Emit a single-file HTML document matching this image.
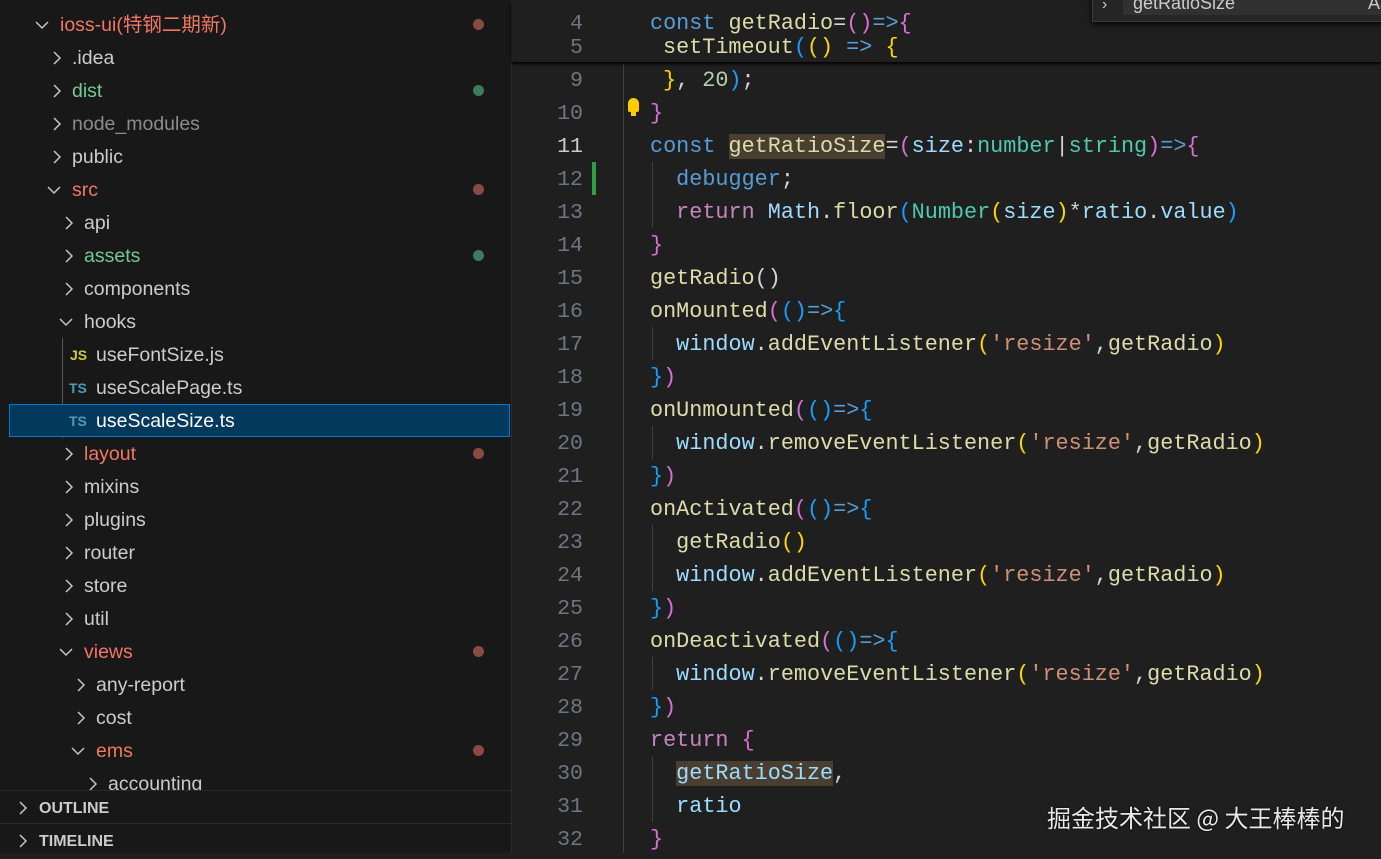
<!DOCTYPE html>
<html><head><meta charset="utf-8"><style>
*{margin:0;padding:0;box-sizing:border-box}
body{width:1381px;height:853px;overflow:hidden;background:#1f1f1f;position:relative;font-family:"Liberation Sans","Noto Sans CJK SC",sans-serif}
#side{position:absolute;left:0;top:0;width:512px;height:853px;background:#181818;border-right:1px solid #2b2b2b}
.row{position:absolute;left:0;width:512px;height:33px;line-height:35px;font-size:19.5px;color:#cccccc;white-space:nowrap}
.chev{position:absolute;top:0;width:14px;height:33px}
.chev svg{position:absolute;top:10px;left:0}
.dot{position:absolute;left:473px;top:11px;width:11px;height:11px;border-radius:50%}
.red{color:#f07764}.grn{color:#73c991}.gry{color:#8c8c8c}
.ic{position:absolute;font-size:14px;font-weight:bold}
#code{position:absolute;left:512px;top:0;width:869px;height:853px}
.ln{position:absolute;left:0;width:71px;text-align:right;font-family:"Liberation Mono",monospace;font-size:21.6px;color:#6e7681;line-height:36px;height:33px}
.cl{position:absolute;left:138px;font-family:"Liberation Mono",monospace;font-size:21.8px;line-height:36px;height:33px;white-space:pre;color:#d4d4d4}
.k{color:#569cd6}.f{color:#dcdcaa}.v{color:#9cdcfe}.t{color:#4ec9b0}.s{color:#ce9178}.r{color:#c586c0}.n{color:#b5cea8}
.b1{color:#ffd700}.b2{color:#da70d6}.b3{color:#179fff}
.hl{background:#4a3e30}
.guide{position:absolute;width:1px;background:#404040}
</style></head><body>
<div id="side">
<div style="position:absolute;left:62px;top:338px;width:1px;height:100px;background:#585858"></div>
<div class="row" style="top:8px"><span class="chev" style="left:35px"><svg width="14" height="14"><path d="M1 4 L7 10 L13 4" stroke="#c5c5c5" stroke-width="1.5" fill="none"/></svg></span><span class="red" style="position:absolute;left:60px">ioss-ui(特钢二期新)</span><span class="dot" style="background:#8a4a44"></span></div>
<div class="row" style="top:41px"><span class="chev" style="left:50px"><svg width="14" height="14"><path d="M4 1 L10 7 L4 13" stroke="#c5c5c5" stroke-width="1.5" fill="none"/></svg></span><span style="position:absolute;left:72px">.idea</span></div>
<div class="row" style="top:74px"><span class="chev" style="left:50px"><svg width="14" height="14"><path d="M4 1 L10 7 L4 13" stroke="#c5c5c5" stroke-width="1.5" fill="none"/></svg></span><span class="grn" style="position:absolute;left:72px">dist</span><span class="dot" style="background:#3f7a5a"></span></div>
<div class="row" style="top:107px"><span class="chev" style="left:50px"><svg width="14" height="14"><path d="M4 1 L10 7 L4 13" stroke="#c5c5c5" stroke-width="1.5" fill="none"/></svg></span><span class="gry" style="position:absolute;left:72px">node_modules</span></div>
<div class="row" style="top:140px"><span class="chev" style="left:50px"><svg width="14" height="14"><path d="M4 1 L10 7 L4 13" stroke="#c5c5c5" stroke-width="1.5" fill="none"/></svg></span><span style="position:absolute;left:72px">public</span></div>
<div class="row" style="top:173px"><span class="chev" style="left:47px"><svg width="14" height="14"><path d="M1 4 L7 10 L13 4" stroke="#c5c5c5" stroke-width="1.5" fill="none"/></svg></span><span class="red" style="position:absolute;left:72px">src</span><span class="dot" style="background:#8a4a44"></span></div>
<div class="row" style="top:206px"><span class="chev" style="left:62px"><svg width="14" height="14"><path d="M4 1 L10 7 L4 13" stroke="#c5c5c5" stroke-width="1.5" fill="none"/></svg></span><span style="position:absolute;left:84px">api</span></div>
<div class="row" style="top:239px"><span class="chev" style="left:62px"><svg width="14" height="14"><path d="M4 1 L10 7 L4 13" stroke="#c5c5c5" stroke-width="1.5" fill="none"/></svg></span><span class="grn" style="position:absolute;left:84px">assets</span><span class="dot" style="background:#3f7a5a"></span></div>
<div class="row" style="top:272px"><span class="chev" style="left:62px"><svg width="14" height="14"><path d="M4 1 L10 7 L4 13" stroke="#c5c5c5" stroke-width="1.5" fill="none"/></svg></span><span style="position:absolute;left:84px">components</span></div>
<div class="row" style="top:305px"><span class="chev" style="left:59px"><svg width="14" height="14"><path d="M1 4 L7 10 L13 4" stroke="#c5c5c5" stroke-width="1.5" fill="none"/></svg></span><span style="position:absolute;left:84px">hooks</span></div>
<div class="row" style="top:338px"><span class="ic" style="left:70px;color:#cbcb41">JS</span><span style="position:absolute;left:96px">useFontSize.js</span></div>
<div class="row" style="top:371px"><span class="ic" style="left:69px;color:#519aba">TS</span><span style="position:absolute;left:96px">useScalePage.ts</span></div>
<div class="row" style="top:404px;left:9px;width:501px;background:#04395e;border:1px solid #0078d4;line-height:33px"><span class="ic" style="left:59px;color:#519aba">TS</span><span style="position:absolute;left:86px;color:#fff">useScaleSize.ts</span></div>
<div class="row" style="top:437px"><span class="chev" style="left:62px"><svg width="14" height="14"><path d="M4 1 L10 7 L4 13" stroke="#c5c5c5" stroke-width="1.5" fill="none"/></svg></span><span class="red" style="position:absolute;left:84px">layout</span><span class="dot" style="background:#8a4a44"></span></div>
<div class="row" style="top:470px"><span class="chev" style="left:62px"><svg width="14" height="14"><path d="M4 1 L10 7 L4 13" stroke="#c5c5c5" stroke-width="1.5" fill="none"/></svg></span><span style="position:absolute;left:84px">mixins</span></div>
<div class="row" style="top:503px"><span class="chev" style="left:62px"><svg width="14" height="14"><path d="M4 1 L10 7 L4 13" stroke="#c5c5c5" stroke-width="1.5" fill="none"/></svg></span><span style="position:absolute;left:84px">plugins</span></div>
<div class="row" style="top:536px"><span class="chev" style="left:62px"><svg width="14" height="14"><path d="M4 1 L10 7 L4 13" stroke="#c5c5c5" stroke-width="1.5" fill="none"/></svg></span><span style="position:absolute;left:84px">router</span></div>
<div class="row" style="top:569px"><span class="chev" style="left:62px"><svg width="14" height="14"><path d="M4 1 L10 7 L4 13" stroke="#c5c5c5" stroke-width="1.5" fill="none"/></svg></span><span style="position:absolute;left:84px">store</span></div>
<div class="row" style="top:602px"><span class="chev" style="left:62px"><svg width="14" height="14"><path d="M4 1 L10 7 L4 13" stroke="#c5c5c5" stroke-width="1.5" fill="none"/></svg></span><span style="position:absolute;left:84px">util</span></div>
<div class="row" style="top:635px"><span class="chev" style="left:59px"><svg width="14" height="14"><path d="M1 4 L7 10 L13 4" stroke="#c5c5c5" stroke-width="1.5" fill="none"/></svg></span><span class="red" style="position:absolute;left:84px">views</span><span class="dot" style="background:#8a4a44"></span></div>
<div class="row" style="top:668px"><span class="chev" style="left:74px"><svg width="14" height="14"><path d="M4 1 L10 7 L4 13" stroke="#c5c5c5" stroke-width="1.5" fill="none"/></svg></span><span style="position:absolute;left:96px">any-report</span></div>
<div class="row" style="top:701px"><span class="chev" style="left:74px"><svg width="14" height="14"><path d="M4 1 L10 7 L4 13" stroke="#c5c5c5" stroke-width="1.5" fill="none"/></svg></span><span style="position:absolute;left:96px">cost</span></div>
<div class="row" style="top:734px"><span class="chev" style="left:71px"><svg width="14" height="14"><path d="M1 4 L7 10 L13 4" stroke="#c5c5c5" stroke-width="1.5" fill="none"/></svg></span><span class="red" style="position:absolute;left:96px">ems</span><span class="dot" style="background:#8a4a44"></span></div>
<div class="row" style="top:767px;height:24px;overflow:hidden"><span class="chev" style="left:86px"><svg width="14" height="14"><path d="M4 1 L10 7 L4 13" stroke="#c5c5c5" stroke-width="1.5" fill="none"/></svg></span><span style="position:absolute;left:108px">accounting</span></div>
<div style="position:absolute;left:0;top:790px;width:512px;height:1px;background:#2b2b2b"></div>
<div class="row" style="top:791px;font-size:16px;font-weight:bold"><span class="chev" style="left:16px"><svg width="14" height="14"><path d="M4 1 L10 7 L4 13" stroke="#c5c5c5" stroke-width="1.5" fill="none"/></svg></span><span style="position:absolute;left:39px">OUTLINE</span></div>
<div style="position:absolute;left:0;top:823px;width:512px;height:1px;background:#2b2b2b"></div>
<div class="row" style="top:824px;font-size:16px;font-weight:bold"><span class="chev" style="left:16px"><svg width="14" height="14"><path d="M4 1 L10 7 L4 13" stroke="#c5c5c5" stroke-width="1.5" fill="none"/></svg></span><span style="position:absolute;left:39px">TIMELINE</span></div>
</div>

<div id="code">
<div class="guide" style="left:111px;top:64px;height:789px"></div>
<div class="guide" style="left:140px;top:162px;height:66px"></div>
<div class="guide" style="left:140px;top:327px;height:33px"></div>
<div class="guide" style="left:140px;top:426px;height:33px"></div>
<div class="guide" style="left:140px;top:525px;height:66px"></div>
<div class="guide" style="left:140px;top:657px;height:33px"></div>
<div class="guide" style="left:140px;top:756px;height:66px"></div>
<div style="position:absolute;left:80px;top:162px;width:4px;height:33px;background:#2ea043"></div>

<div class="ln" style="top:63px">9</div><div class="cl" style="top:63px;left:151px"><span class="b1">}</span>, <span class="n">20</span><span class="b3">)</span>;</div>
<div class="ln" style="top:96px">10</div><div class="cl" style="top:96px"><span class="b2">}</span></div>
<div style="position:absolute;left:116px;top:98px;width:11px;height:14px;background:#ffcc00;border-radius:6px 6px 2px 2px"></div>
<div style="position:absolute;left:119px;top:112px;width:5px;height:4px;background:#ffcc00"></div>
<div class="ln" style="top:129px;color:#cccccc">11</div><div class="cl" style="top:129px"><span class="k">const</span> <span class="f hl">getRatioSize</span>=<span class="b2">(</span><span class="v">size</span>:<span class="t">number</span>|<span class="t">string</span><span class="b2">)</span><span class="k">=&gt;</span><span class="b2">{</span></div>
<div class="ln" style="top:162px">12</div><div class="cl" style="top:162px">  <span class="k">debugger</span>;</div>
<div class="ln" style="top:195px">13</div><div class="cl" style="top:195px">  <span class="r">return</span> <span class="v">Math</span>.<span class="f">floor</span><span class="b3">(</span><span class="t">Number</span><span class="b1">(</span><span class="v">size</span><span class="b1">)</span>*<span class="v">ratio</span>.<span class="v">value</span><span class="b3">)</span></div>
<div class="ln" style="top:228px">14</div><div class="cl" style="top:228px"><span class="b2">}</span></div>
<div class="ln" style="top:261px">15</div><div class="cl" style="top:261px"><span class="f">getRadio</span>()</div>
<div class="ln" style="top:294px">16</div><div class="cl" style="top:294px"><span class="f">onMounted</span><span class="b2">(</span><span class="b3">()</span><span class="k">=&gt;</span><span class="b3">{</span></div>
<div class="ln" style="top:327px">17</div><div class="cl" style="top:327px">  <span class="v">window</span>.<span class="f">addEventListener</span><span class="b1">(</span><span class="s">'resize'</span>,<span class="f">getRadio</span><span class="b1">)</span></div>
<div class="ln" style="top:360px">18</div><div class="cl" style="top:360px"><span class="b3">}</span><span class="b2">)</span></div>
<div class="ln" style="top:393px">19</div><div class="cl" style="top:393px"><span class="f">onUnmounted</span><span class="b2">(</span><span class="b3">()</span><span class="k">=&gt;</span><span class="b3">{</span></div>
<div class="ln" style="top:426px">20</div><div class="cl" style="top:426px">  <span class="v">window</span>.<span class="f">removeEventListener</span><span class="b1">(</span><span class="s">'resize'</span>,<span class="f">getRadio</span><span class="b1">)</span></div>
<div class="ln" style="top:459px">21</div><div class="cl" style="top:459px"><span class="b3">}</span><span class="b2">)</span></div>
<div class="ln" style="top:492px">22</div><div class="cl" style="top:492px"><span class="f">onActivated</span><span class="b2">(</span><span class="b3">()</span><span class="k">=&gt;</span><span class="b3">{</span></div>
<div class="ln" style="top:525px">23</div><div class="cl" style="top:525px">  <span class="f">getRadio</span><span class="b1">()</span></div>
<div class="ln" style="top:558px">24</div><div class="cl" style="top:558px">  <span class="v">window</span>.<span class="f">addEventListener</span><span class="b1">(</span><span class="s">'resize'</span>,<span class="f">getRadio</span><span class="b1">)</span></div>
<div class="ln" style="top:591px">25</div><div class="cl" style="top:591px"><span class="b3">}</span><span class="b2">)</span></div>
<div class="ln" style="top:624px">26</div><div class="cl" style="top:624px"><span class="f">onDeactivated</span><span class="b2">(</span><span class="b3">()</span><span class="k">=&gt;</span><span class="b3">{</span></div>
<div class="ln" style="top:657px">27</div><div class="cl" style="top:657px">  <span class="v">window</span>.<span class="f">removeEventListener</span><span class="b1">(</span><span class="s">'resize'</span>,<span class="f">getRadio</span><span class="b1">)</span></div>
<div class="ln" style="top:690px">28</div><div class="cl" style="top:690px"><span class="b3">}</span><span class="b2">)</span></div>
<div class="ln" style="top:723px">29</div><div class="cl" style="top:723px"><span class="r">return</span> <span class="b2">{</span></div>
<div class="ln" style="top:756px">30</div><div class="cl" style="top:756px">  <span class="v hl">getRatioSize</span>,</div>
<div class="ln" style="top:789px">31</div><div class="cl" style="top:789px">  <span class="v">ratio</span></div>
<div class="ln" style="top:822px">32</div><div class="cl" style="top:822px"><span class="b2">}</span></div>

<div style="position:absolute;left:0;top:0;width:869px;height:62px;background:#1f1f1f;box-shadow:0 2px 3px #000"></div>
<div class="ln" style="top:7px;height:32px;line-height:34px">4</div><div class="cl" style="top:7px;line-height:34px"><span class="k">const</span> <span class="f">getRadio</span>=<span class="b2">()</span><span class="k">=&gt;</span><span class="b2">{</span></div>
<div class="ln" style="top:32px;height:30px;line-height:32px">5</div><div class="cl" style="top:32px;line-height:32px;left:151px"><span class="f">setTimeout</span><span class="b3">(</span><span class="b1">()</span> <span class="k">=&gt;</span> <span class="b1">{</span></div>

<div style="position:absolute;left:580px;top:-2px;width:300px;height:24px;background:#252526;border:1px solid #3c3c3c;box-shadow:0 2px 6px #000"></div>
<div style="position:absolute;left:611px;top:-2px;width:270px;height:17px;background:#313131;border-radius:2px;color:#cccccc;font-size:18px;line-height:10px;padding-left:10px;overflow:hidden">getRatioSize<span style="position:absolute;left:245px">Aa</span></div>
<div style="position:absolute;left:590px;top:-4px;color:#ccc;font-size:16px">›</div>

<div style="position:absolute;left:535px;top:799px;color:#e8e8e8;font-size:24px;font-family:'Noto Sans CJK SC','Liberation Sans',sans-serif;white-space:nowrap;text-shadow:0 0 2px #000">掘金技术社区 @ 大王棒棒的</div>
</div>
</body></html>
